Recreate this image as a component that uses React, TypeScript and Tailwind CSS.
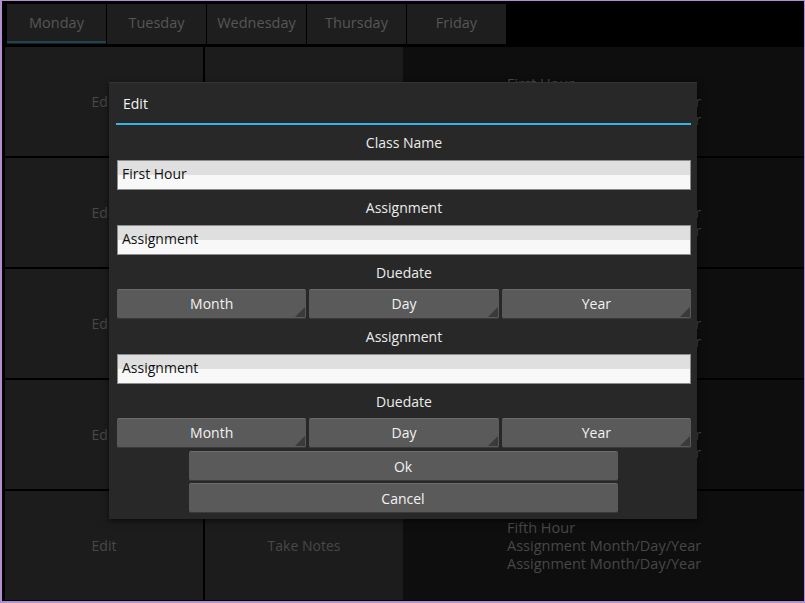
import React from "react";

// ── Data ──

const days = ["Monday", "Tuesday", "Wednesday", "Thursday", "Friday"];
const hours = ["First Hour", "Second Hour", "Third Hour", "Fourth Hour", "Fifth Hour"];

const font = { fontFamily: '"Open Sans", "DejaVu Sans", sans-serif' };

// ── Pieces ──

function Label({ text, h }: { text: string; h: string }) {
  return (
    <div className={`${h} flex items-center justify-center text-[14px] text-[#ececec]`}>{text}</div>
  );
}

function Field({ value }: { value: string }) {
  return (
    <div className="h-[30px] border border-[#8c8c8c] bg-[linear-gradient(#dfdfdf_50%,#f8f8f8_50%)] flex items-center pl-[4px] pb-[3px] text-[14px] text-[#111]">
      {value}
    </div>
  );
}

function Spinner({ text }: { text: string }) {
  return (
    <div className="relative flex-1 h-[30px] rounded-[2px] bg-[#5a5a5a] border-t border-[#6c6c6c] border-b border-b-[#3a3a3a] flex items-center justify-center pb-[1px] text-[14px] text-[#f2f2f2]">
      {text}
      <svg className="absolute right-[1px] bottom-[1px]" width="10" height="10" viewBox="0 0 10 10">
        <path d="M10 0 L10 10 L0 10 Z" fill="#3a3a3a" />
      </svg>
    </div>
  );
}

function Button({ text }: { text: string }) {
  return (
    <div className="w-[429px] h-[30px] rounded-[2px] bg-[#5a5a5a] border-t border-[#6c6c6c] border-b border-b-[#3a3a3a] flex items-center justify-center text-[14px] text-[#f2f2f2]">
      {text}
    </div>
  );
}

function DateRow() {
  return (
    <div className="flex gap-[3px]">
      <Spinner text="Month" />
      <Spinner text="Day" />
      <Spinner text="Year" />
    </div>
  );
}

// ── Main ──

export default function App() {
  return (
    <div
      className="relative w-[805px] h-[603px] bg-black border-l-2 border-t border-r border-b-2 border-[#b28fcf] overflow-hidden"
      style={font}
    >
      {/* Day tabs */}
      <div className="flex gap-[1px] pl-[5px] pt-[3px]">
        {days.map((d, i) => (
          <div
            key={d}
            className="relative w-[99px] h-[40px] bg-[#1e1e1e] flex items-center justify-center pb-[2px] text-[14.5px] text-[#565656]"
          >
            {d}
            {i === 0 && <div className="absolute left-0 right-0 bottom-[1px] h-[2px] bg-[#1d4552]" />}
          </div>
        ))}
      </div>

      {/* Schedule grid */}
      <div className="flex flex-col gap-[2px] pl-[3px] pt-[3px]">
        {hours.map((h) => (
          <div key={h} className="flex h-[109px]">
            <div className="w-[198px] bg-[#1c1c1c] flex items-center justify-center text-[14px] text-[#484848]">
              Edit
            </div>
            <div className="w-[198px] ml-[2px] bg-[#1c1c1c] flex items-center justify-center text-[14px] text-[#484848]">
              Take Notes
            </div>
            <div className="flex-1 bg-[#0e0e0e] flex flex-col justify-center pl-[104px] text-[14.5px] leading-[18px] text-[#474747]">
              <div>{h}</div>
              <div>Assignment Month/Day/Year</div>
              <div>Assignment Month/Day/Year</div>
            </div>
          </div>
        ))}
      </div>

      {/* Edit dialog */}
      <div className="absolute left-[107px] top-[81px] w-[588px] h-[437px] bg-[#282828] border-t border-[#333] shadow-[0_2px_6px_rgba(0,0,0,0.6)] flex flex-col">
        <div className="h-[40px] flex items-center pl-[14px] text-[14px] text-[#f4f4f4]">Edit</div>
        <div className="mx-[7px] mr-[6px] h-[2px] bg-[#33b5e5]" />
        <div className="flex flex-col pl-[8px] pr-[6px]">
          <Label text="Class Name" h="h-[35px]" />
          <Field value="First Hour" />
          <Label text="Assignment" h="h-[35px]" />
          <Field value="Assignment" />
          <Label text="Duedate" h="h-[34px]" />
          <DateRow />
          <Label text="Assignment" h="h-[35px]" />
          <Field value="Assignment" />
          <Label text="Duedate" h="h-[34px]" />
          <DateRow />
        </div>
        <div className="flex flex-col items-center gap-[2px] mt-[3px]">
          <Button text="Ok" />
          <Button text="Cancel" />
        </div>
      </div>
    </div>
  );
}
